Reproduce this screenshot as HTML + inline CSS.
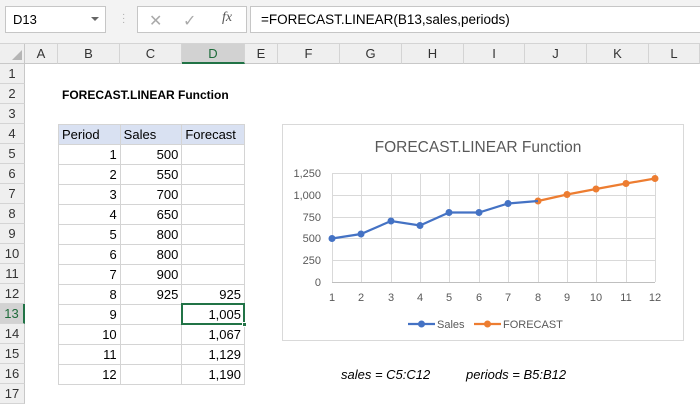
<!DOCTYPE html>
<html><head><style>
*{margin:0;padding:0;box-sizing:border-box}
body{width:700px;height:400px;overflow:hidden;background:#fff;font-family:"Liberation Sans",sans-serif;font-size:13px;color:#000;position:relative}
.a{position:absolute}
.top{left:0;top:0;width:700px;height:44px;background:#f3f3f3;border-bottom:1px solid #d4d4d4}
.ch{top:44px;height:20px;background:#efefef;border-right:1px solid #d4d4d4;border-bottom:1px solid #c8c8c8;text-align:center;line-height:20px;color:#333;font-size:13px}
.rh{left:0;width:25px;height:20px;background:#efefef;border-bottom:1px solid #d4d4d4;border-right:1px solid #c8c8c8;text-align:center;line-height:20px;color:#333}
.c{height:20px;line-height:20px;border-right:1px solid #d4d4d4;border-bottom:1px solid #d4d4d4;padding:0 3px;text-align:right}
</style></head><body>
<div class="a top"></div>
<div class="a" style="left:5px;top:6px;width:101px;height:27px;background:#fff;border:1px solid #c6c6c6;line-height:25px;padding-left:7px;font-size:13px">D13</div>
<div class="a" style="left:91px;top:17px;width:0;height:0;border-left:4px solid transparent;border-right:4px solid transparent;border-top:4px solid #666"></div>
<div class="a" style="left:122px;top:13px;color:#aaa;font-size:10px;line-height:4px">·<br>·<br>·</div>
<div class="a" style="left:137px;top:6px;width:110px;height:27px;background:#fff;border:1px solid #c6c6c6"></div>
<div class="a" style="left:149px;top:11px;color:#aaa;font-size:16px">✕</div>
<div class="a" style="left:183px;top:11px;color:#aaa;font-size:16px">✓</div>
<div class="a" style="left:222px;top:10px;color:#555;font-size:14px;font-style:italic;font-family:'Liberation Serif',serif">fx</div>
<div class="a" style="left:250px;top:6px;width:450px;height:27px;background:#fff;border:1px solid #c6c6c6;border-right:none;line-height:25px;padding-left:10px;font-size:13.5px">=FORECAST.LINEAR(B13,sales,periods)</div>
<div class="a" style="left:0;top:44px;width:25px;height:20px;background:#efefef;border-right:1px solid #c8c8c8;border-bottom:1px solid #c8c8c8"></div>
<div class="a" style="left:12px;top:50px;width:0;height:0;border-left:10px solid transparent;border-bottom:10px solid #b5b5b5"></div>
<div class="a ch" style="left:25px;width:33px">A</div>
<div class="a ch" style="left:58px;width:62px">B</div>
<div class="a ch" style="left:120px;width:62px">C</div>
<div class="a ch" style="left:182px;width:63px;background:#d2d2d2;color:#1e6b3a;border-bottom:2px solid #217346">D</div>
<div class="a ch" style="left:245px;width:33px">E</div>
<div class="a ch" style="left:278px;width:62px">F</div>
<div class="a ch" style="left:340px;width:62px">G</div>
<div class="a ch" style="left:402px;width:62px">H</div>
<div class="a ch" style="left:464px;width:61px">I</div>
<div class="a ch" style="left:525px;width:62px">J</div>
<div class="a ch" style="left:587px;width:62px">K</div>
<div class="a ch" style="left:649px;width:51px">L</div>
<div class="a rh" style="top:64px">1</div><div class="a rh" style="top:84px">2</div><div class="a rh" style="top:104px">3</div><div class="a rh" style="top:124px">4</div><div class="a rh" style="top:144px">5</div><div class="a rh" style="top:164px">6</div><div class="a rh" style="top:184px">7</div><div class="a rh" style="top:204px">8</div><div class="a rh" style="top:224px">9</div><div class="a rh" style="top:244px">10</div><div class="a rh" style="top:264px">11</div><div class="a rh" style="top:284px">12</div>
<div class="a rh" style="top:304px;background:#d2d2d2;color:#1e6b3a;border-right:2px solid #217346">13</div>
<div class="a rh" style="top:324px">14</div><div class="a rh" style="top:344px">15</div><div class="a rh" style="top:364px">16</div><div class="a rh" style="top:384px">17</div>
<div class="a" style="left:62px;top:88px;font-weight:bold;font-size:12px">FORECAST.LINEAR Function</div>
<div class="a" style="left:58px;top:124px;width:187px;border-left:1px solid #d4d4d4;border-top:1px solid #d4d4d4">
<div style="display:flex;background:#d9e1f2"><div class="c" style="width:62px;text-align:left">Period</div><div class="c" style="width:62px;text-align:left">Sales</div><div class="c" style="width:63px;text-align:left">Forecast</div></div>
<div style="display:flex"><div class="c" style="width:62px">1</div><div class="c" style="width:62px">500</div><div class="c" style="width:63px"></div></div>
<div style="display:flex"><div class="c" style="width:62px">2</div><div class="c" style="width:62px">550</div><div class="c" style="width:63px"></div></div>
<div style="display:flex"><div class="c" style="width:62px">3</div><div class="c" style="width:62px">700</div><div class="c" style="width:63px"></div></div>
<div style="display:flex"><div class="c" style="width:62px">4</div><div class="c" style="width:62px">650</div><div class="c" style="width:63px"></div></div>
<div style="display:flex"><div class="c" style="width:62px">5</div><div class="c" style="width:62px">800</div><div class="c" style="width:63px"></div></div>
<div style="display:flex"><div class="c" style="width:62px">6</div><div class="c" style="width:62px">800</div><div class="c" style="width:63px"></div></div>
<div style="display:flex"><div class="c" style="width:62px">7</div><div class="c" style="width:62px">900</div><div class="c" style="width:63px"></div></div>
<div style="display:flex"><div class="c" style="width:62px">8</div><div class="c" style="width:62px">925</div><div class="c" style="width:63px">925</div></div>
<div style="display:flex"><div class="c" style="width:62px">9</div><div class="c" style="width:62px"></div><div class="c" style="width:63px">1,005</div></div>
<div style="display:flex"><div class="c" style="width:62px">10</div><div class="c" style="width:62px"></div><div class="c" style="width:63px">1,067</div></div>
<div style="display:flex"><div class="c" style="width:62px">11</div><div class="c" style="width:62px"></div><div class="c" style="width:63px">1,129</div></div>
<div style="display:flex"><div class="c" style="width:62px">12</div><div class="c" style="width:62px"></div><div class="c" style="width:63px">1,190</div></div>
</div>
<div class="a" style="left:181px;top:303px;width:64px;height:22px;border:2px solid #217346"></div>
<div class="a" style="left:242px;top:322px;width:5px;height:5px;background:#217346;border:1px solid #fff"></div>
<svg class="a" style="left:0;top:0" width="700" height="400" font-family="Liberation Sans, sans-serif">
<rect x="282.5" y="124.5" width="401" height="216" fill="#fff" stroke="#d9d9d9"/>
<text x="478" y="152" font-size="15.5" fill="#595959" text-anchor="middle">FORECAST.LINEAR Function</text>
<g stroke="#d9d9d9" stroke-width="1">
<line x1="332" y1="173.5" x2="655" y2="173.5"/><line x1="332" y1="195.5" x2="655" y2="195.5"/><line x1="332" y1="217.5" x2="655" y2="217.5"/><line x1="332" y1="238.5" x2="655" y2="238.5"/><line x1="332" y1="260.5" x2="655" y2="260.5"/>
<line x1="361.5" y1="173" x2="361.5" y2="282"/><line x1="391.5" y1="173" x2="391.5" y2="282"/><line x1="420.5" y1="173" x2="420.5" y2="282"/><line x1="449.5" y1="173" x2="449.5" y2="282"/><line x1="479.5" y1="173" x2="479.5" y2="282"/><line x1="508.5" y1="173" x2="508.5" y2="282"/><line x1="538.5" y1="173" x2="538.5" y2="282"/><line x1="567.5" y1="173" x2="567.5" y2="282"/><line x1="596.5" y1="173" x2="596.5" y2="282"/><line x1="626.5" y1="173" x2="626.5" y2="282"/><line x1="655.5" y1="173" x2="655.5" y2="282"/>
<line x1="332.5" y1="173" x2="332.5" y2="282"/>
</g>
<line x1="332" y1="282.5" x2="655" y2="282.5" stroke="#bfbfbf"/>
<g font-size="11" fill="#595959" text-anchor="end">
<text x="321" y="177">1,250</text><text x="321" y="199">1,000</text><text x="321" y="221">750</text><text x="321" y="242">500</text><text x="321" y="264">250</text><text x="321" y="286">0</text>
</g>
<g font-size="11" fill="#595959" text-anchor="middle">
<text x="332" y="301">1</text><text x="361" y="301">2</text><text x="391" y="301">3</text><text x="420" y="301">4</text><text x="449" y="301">5</text><text x="479" y="301">6</text><text x="508" y="301">7</text><text x="538" y="301">8</text><text x="567" y="301">9</text><text x="596" y="301">10</text><text x="626" y="301">11</text><text x="655" y="301">12</text>
</g>
<polyline fill="none" stroke="#ed7d31" stroke-width="2.2" points="538,201 567,194.5 596,189 626,183.5 655,178.5"/>
<g fill="#ed7d31"><circle cx="538" cy="201" r="3.5"/><circle cx="567" cy="194.5" r="3.5"/><circle cx="596" cy="189" r="3.5"/><circle cx="626" cy="183.5" r="3.5"/><circle cx="655" cy="178.5" r="3.5"/></g>
<polyline fill="none" stroke="#4472c4" stroke-width="2.2" points="332,238.5 361,234 391,221 420,225.5 449,212.5 479,212.5 508,203.5 538,201"/>
<g fill="#4472c4"><circle cx="332" cy="238.5" r="3.5"/><circle cx="361" cy="234" r="3.5"/><circle cx="391" cy="221" r="3.5"/><circle cx="420" cy="225.5" r="3.5"/><circle cx="449" cy="212.5" r="3.5"/><circle cx="479" cy="212.5" r="3.5"/><circle cx="508" cy="203.5" r="3.5"/></g>
<line x1="408" y1="324" x2="435" y2="324" stroke="#4472c4" stroke-width="2.2"/><circle cx="421.5" cy="324" r="3.5" fill="#4472c4"/>
<text x="437" y="328" font-size="11" fill="#595959">Sales</text>
<line x1="474" y1="324" x2="501" y2="324" stroke="#ed7d31" stroke-width="2.2"/><circle cx="487.5" cy="324" r="3.5" fill="#ed7d31"/>
<text x="503" y="328" font-size="11" fill="#595959">FORECAST</text>
<text x="341" y="379" font-size="13" font-style="italic">sales = C5:C12</text>
<text x="466" y="379" font-size="13" font-style="italic">periods = B5:B12</text>
</svg>
</body></html>
